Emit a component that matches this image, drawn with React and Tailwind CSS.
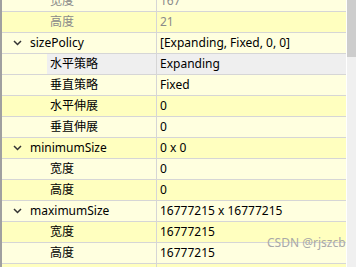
const LIGHT = "bg-[#ffffdf]";
const YELLOW = "bg-[#ffffbf]";

const rows = [
  { name: "宽度", value: "167", level: 1, bg: LIGHT, muted: true },
  { name: "高度", value: "21", level: 1, bg: YELLOW, muted: true },
  { name: "sizePolicy", value: "[Expanding, Fixed, 0, 0]", level: 0, bg: LIGHT },
  { name: "水平策略", value: "Expanding", level: 1, bg: LIGHT, selected: true },
  { name: "垂直策略", value: "Fixed", level: 1, bg: LIGHT },
  { name: "水平伸展", value: "0", level: 1, bg: YELLOW },
  { name: "垂直伸展", value: "0", level: 1, bg: LIGHT },
  { name: "minimumSize", value: "0 x 0", level: 0, bg: YELLOW },
  { name: "宽度", value: "0", level: 1, bg: LIGHT },
  { name: "高度", value: "0", level: 1, bg: YELLOW },
  { name: "maximumSize", value: "16777215 x 16777215", level: 0, bg: LIGHT },
  { name: "宽度", value: "16777215", level: 1, bg: YELLOW },
  { name: "高度", value: "16777215", level: 1, bg: LIGHT },
  { name: "", value: "", level: 1, bg: YELLOW },
];

function Chevron() {
  return (
    <svg width="9" height="6" viewBox="0 0 9 6" className="ml-[11px]">
      <polyline points="1,1 4.5,4.5 8,1" fill="none" stroke="#333" strokeWidth="1.5" />
    </svg>
  );
}

function Row({ row }) {
  const cellBg = row.selected ? "bg-[#efefef]" : row.bg;
  const text = row.muted ? "text-[#8a8a8a]" : "text-black";
  return (
    <div className={`flex h-[21px] shrink-0 border-b border-[#d6d6d6] ${row.bg}`}>
      {row.level === 0 ? (
        <>
          <div className="w-[28px] flex items-center">
            <Chevron />
          </div>
          <div className={`w-[127px] flex items-center border-r border-[#d6d6d6] ${cellBg} ${text}`}>
            {row.name}
          </div>
        </>
      ) : (
        <>
          <div className="w-[45px]" />
          <div className={`w-[110px] flex items-center pl-[3px] border-r border-[#d6d6d6] ${cellBg} ${text}`}>
            {row.name}
          </div>
        </>
      )}
      <div className={`flex-1 flex items-center pl-[3px] ${cellBg} ${text}`}>{row.value}</div>
    </div>
  );
}

export default function App() {
  return (
    <div
      className="relative flex w-[356px] h-[267px] overflow-hidden bg-white text-[12px] leading-none"
      style={{ fontFamily: '"Noto Sans", "Noto Sans CJK SC", sans-serif' }}
    >
      <div className="w-[2px] bg-[#a0a0a0]" />
      <div className="flex-1 overflow-hidden">
        <div className="flex flex-col -mt-[9px]">
          {rows.map((row, i) => (
            <Row key={i} row={row} />
          ))}
        </div>
      </div>
      <div className="w-[10px] flex flex-col border-l border-white bg-[#f0f0f0]">
        <div className="h-[57px] bg-[#cdcdcd]" />
      </div>
      <div className="absolute left-[267px] top-[237px] text-[12px] text-[#a8a8a8]">CSDN @rjszcb</div>
    </div>
  );
}
